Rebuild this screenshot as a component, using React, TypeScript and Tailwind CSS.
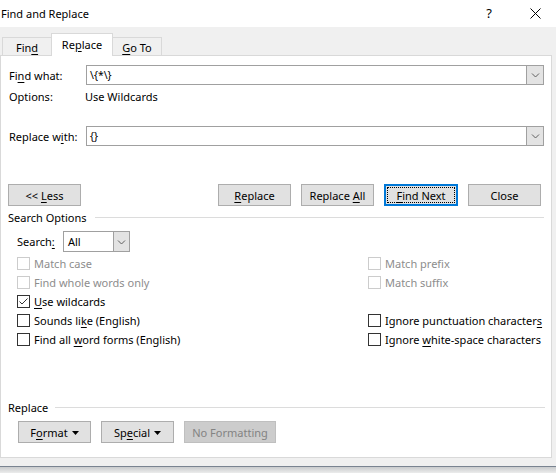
import type { ReactNode } from 'react'

const U = ({ children }: { children: ReactNode }) => <span className="underline underline-offset-2">{children}</span>

const Chevron = () => (
  <svg width="9" height="6" viewBox="0 0 9 6" fill="none" stroke="#606060" strokeWidth="1">
    <path d="M1 1.5 L4.5 5 L8 1.5" />
  </svg>
)

const Caret = () => (
  <svg width="7" height="4" viewBox="0 0 7 4" className="ml-[4px] mt-px">
    <path d="M0 0 H7 L3.5 4 Z" fill="#000" />
  </svg>
)

const Combo = ({ value }: { value: string }) => (
  <div className="flex h-[20px] w-[458px] border border-[#a0a0a0] bg-white">
    <div className="flex flex-1 items-center pl-[3px] text-[10.5px] text-black">{value}</div>
    <div className="flex w-[17px] items-center justify-center border-l border-[#a0a0a0] bg-[#e3e3e3]">
      <Chevron />
    </div>
  </div>
)

const Btn = ({ children, className = '' }: { children: ReactNode; className?: string }) => (
  <div
    className={`flex h-[22px] w-[73px] items-center justify-center border border-[#adadad] bg-[#e1e1e1] text-black ${className}`}
  >
    <span className="flex items-center whitespace-pre">{children}</span>
  </div>
)

const Check = ({
  label,
  checked = false,
  disabled = false,
}: {
  label: ReactNode
  checked?: boolean
  disabled?: boolean
}) => (
  <div className="flex h-[19px] items-center whitespace-nowrap">
    <div
      className={`flex h-[13px] w-[13px] shrink-0 items-center justify-center border bg-white ${
        disabled ? 'border-[#cccccc]' : 'border-[#333333]'
      }`}
    >
      {checked && (
        <svg width="11" height="11" viewBox="0 0 11 11" fill="none" stroke="#333" strokeWidth="1">
          <path d="M1.5 5.5 L4 8 L9.5 2.5" />
        </svg>
      )}
    </div>
    <span className={`ml-[4px] ${disabled ? 'text-[#8d8d8d]' : 'text-black'}`}>{label}</span>
  </div>
)

export default function App() {
  return (
    <div className="flex h-[473px] w-[556px] flex-col overflow-hidden bg-[#f0f0f0] font-['Segoe_UI','Noto_Sans',sans-serif] text-[11px] leading-none text-black">
      {/* Title bar */}
      <div className="flex h-[27px] shrink-0 items-center bg-white">
        <span className="pl-[1px]">Find and Replace</span>
        <span className="ml-auto mr-[38px] text-[13px]">?</span>
        <svg width="11" height="11" viewBox="0 0 11 11" stroke="#000" strokeWidth="1" className="mr-[15px]">
          <path d="M0.5 0.5 L10.5 10.5 M10.5 0.5 L0.5 10.5" />
        </svg>
      </div>

      {/* Tabs */}
      <div className="relative z-10 flex h-[29px] shrink-0 items-end pl-[2px]">
        <div className="flex h-[19px] w-[50px] items-center justify-center border border-b-0 border-[#d9d9d9] pt-px">
          Fin<U>d</U>
        </div>
        <div className="-mx-px flex h-[23px] w-[62px] items-center justify-center border border-b-0 border-[#d9d9d9] bg-white pb-[2px]">
          Re<U>p</U>lace
        </div>
        <div className="flex h-[19px] w-[50px] items-center justify-center border border-b-0 border-[#d9d9d9] pt-px">
          <U>G</U>o To
        </div>
      </div>

      {/* Panel */}
      <div className="-mt-px flex h-[403px] w-[552px] shrink-0 flex-col border border-[#d9d9d9] bg-white">
        <div className="mt-[9px] flex items-center pl-[8px]">
          <span className="w-[77px]">
            Fi<U>n</U>d what:
          </span>
          <Combo value="\{*\}" />
        </div>
        <div className="mt-[3px] flex h-[16px] items-center pl-[8px]">
          <span className="w-[76px]">Options:</span>
          <span>Use Wildcards</span>
        </div>
        <div className="mt-[22px] flex items-center pl-[8px]">
          <span className="w-[77px]">
            Replace w<U>i</U>th:
          </span>
          <Combo value="{}" />
        </div>

        <div className="mt-[38px] flex items-center pl-[7px]">
          <Btn>
            &lt;&lt; <U>L</U>ess
          </Btn>
          <Btn className="ml-[137px]">
            <U>R</U>eplace
          </Btn>
          <Btn className="ml-[10px]">
            Replace <U>A</U>ll
          </Btn>
          <div className="ml-[10px] flex h-[22px] w-[74px] items-center justify-center border-2 border-[#0078d7] bg-[#e1e1e1]">
            <div className="flex h-[16px] w-[68px] items-center justify-center border border-dotted border-[#000]">
              <span className="whitespace-pre">
                <U>F</U>ind Next
              </span>
            </div>
          </div>
          <Btn className="ml-[10px]">Close</Btn>
        </div>

        <div className="mt-[4px] flex h-[14px] items-center pl-[7px]">
          <span>Search Options</span>
          <div className="ml-[8px] mr-[7px] h-px flex-1 bg-[#dcdcdc]" />
        </div>

        <div className="mt-[7px] flex items-center pl-[16px]">
          <span className="w-[46px]">
            Search<U>:</U>
          </span>
          <div className="flex h-[21px] w-[67px] border border-[#a0a0a0]">
            <div className="flex flex-1 items-center pl-[4px]">All</div>
            <div className="flex w-[16px] items-center justify-center border-l border-[#a0a0a0] bg-[#e3e3e3]">
              <Chevron />
            </div>
          </div>
        </div>

        <div className="mt-[2px] flex pl-[16px]">
          <div className="flex w-[351px] flex-col">
            <Check label="Match case" disabled />
            <Check label="Find whole words only" disabled />
            <Check
              checked
              label={
                <>
                  <U>U</U>se wildcards
                </>
              }
            />
            <Check
              label={
                <>
                  Sounds li<U>k</U>e (English)
                </>
              }
            />
            <Check
              label={
                <>
                  Find all <U>w</U>ord forms (English)
                </>
              }
            />
          </div>
          <div className="flex flex-col">
            <Check label="Match prefix" disabled />
            <Check label="Match suffix" disabled />
            <div className="h-[19px]" />
            <Check
              label={
                <>
                  Ignore punctuation character<U>s</U>
                </>
              }
            />
            <Check
              label={
                <>
                  Ignore <U>w</U>hite-space characters
                </>
              }
            />
          </div>
        </div>

        <div className="mt-[51px] flex h-[14px] items-center pl-[7px]">
          <span>Replace</span>
          <div className="ml-[7px] mr-[6px] h-px flex-1 bg-[#dcdcdc]" />
        </div>

        <div className="mt-[7px] flex items-center pl-[17px]">
          <Btn>
            F<U>o</U>rmat
            <Caret />
          </Btn>
          <Btn className="ml-[10px]">
            Sp<U>e</U>cial
            <Caret />
          </Btn>
          <div className="ml-[10px] flex h-[22px] w-[92px] items-center justify-center border border-[#bfbfbf] bg-[#cccccc] text-[#838383]">
            No Formatting
          </div>
        </div>
      </div>

      <div className="h-[8px] shrink-0" />
      <div className="h-px shrink-0 bg-[#7a8491]" />
      <div className="flex-1 bg-gradient-to-b from-[#c9cbcd] to-[#ececec]" />
    </div>
  )
}
